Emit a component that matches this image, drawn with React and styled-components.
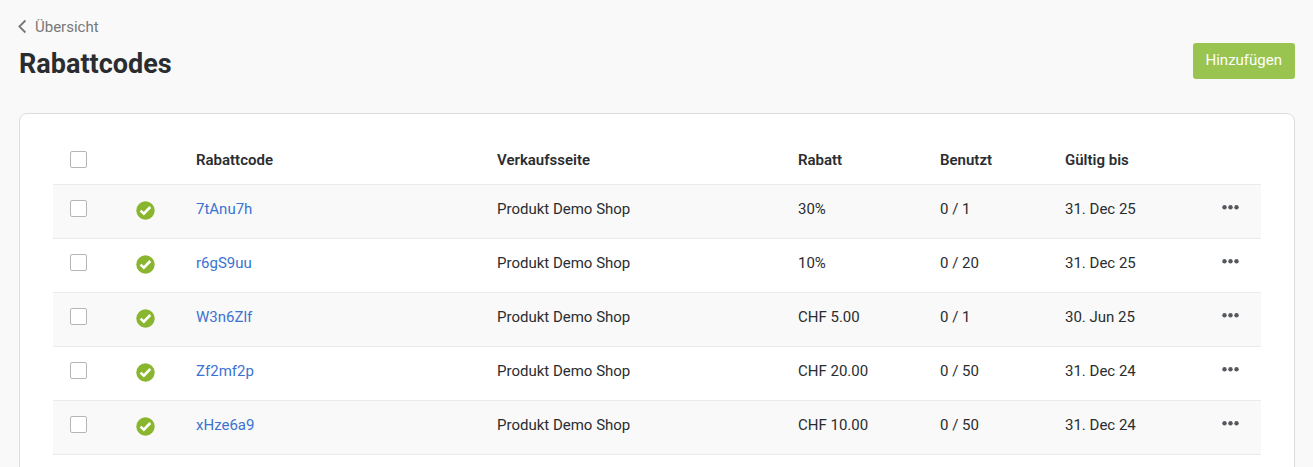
import React from 'react';
import styled, { createGlobalStyle } from "styled-components";


const GlobalStyle = createGlobalStyle`
* {
box-sizing: border-box;
}
body {
margin: 0;
background: #f9f9f9;
color: #2a2d30;
font-family: Roboto, "Liberation Sans", sans-serif;
font-size: 15px;
line-height: 20px;
}
`;

const Page = styled.main`
padding: 17px 18px 0 19px;
`;
const BackLink = styled.a`
display: inline-flex;
align-items: center;
gap: 8px;
color: #777;
text-decoration: none;
`;
const BackIcon = styled.svg`
width: 8px;
height: 14px;
overflow: visible;
`;
const Header = styled.header`
display: flex;
justify-content: space-between;
align-items: flex-start;
padding: 4px 0 32px;
`;
const Title = styled.h1`
margin: 0;
padding-top: 4px;
font-size: 27px;
line-height: 34px;
font-weight: 700;
`;
const AddButton = styled.button`
height: 36px;
padding: 0 13px 2px;
border: none;
border-radius: 3px;
background: #99c44f;
color: #fff;
font: inherit;
cursor: pointer;
`;
const Panel = styled.section`
padding: 20px 33px 32px;
border: 1px solid #ddd;
border-radius: 8px;
background: #fff;
`;
const Table = styled.table`
width: 100%;
table-layout: fixed;
border-collapse: collapse;
`;
const Col = styled.col`
width: ${({ $width }) => $width || "auto"};
`;
const HeadCell = styled.th`
height: 50px;
padding: 2px 0 0 17px;
border-bottom: 1px solid #ebebeb;
font-weight: 600;
text-align: left;
`;
const Row = styled.tr`
height: 54px;
background: ${({ $shaded }) => ($shaded ? "#f9f9f9" : "#fff")};
`;
const Cell = styled.td`
padding: 14px 0 0 17px;
border-bottom: 1px solid #ebebeb;
vertical-align: top;
`;
const SelectCell = styled(Cell)`
padding-top: 15px;
`;
const StatusCell = styled(Cell)`
padding-top: 16px;
`;
const Checkbox = styled.input`
appearance: none;
display: block;
width: 17px;
height: 17px;
margin: 0;
border: 1px solid #b5b5b5;
border-radius: 2px;
background: #fff;
&:checked {
background: #8ab62f;
}
`;
const StatusIcon = styled.svg`
display: block;
width: 19px;
height: 19px;
`;
const CodeLink = styled.a`
color: #3b73d1;
text-decoration: none;
`;
const MenuButton = styled.button`
display: block;
padding: 0;
border: none;
background: none;
color: #55595e;
line-height: 0;
cursor: pointer;
`;

const columns = ["66px", "60px", "", "", "142px", "125px", "157px", "56px"];

const discounts = [
    { code: "7tAnu7h", page: "Produkt Demo Shop", amount: "30%", used: "0 / 1", validUntil: "31. Dec 25" },
    { code: "r6gS9uu", page: "Produkt Demo Shop", amount: "10%", used: "0 / 20", validUntil: "31. Dec 25" },
    { code: "W3n6Zlf", page: "Produkt Demo Shop", amount: "CHF 5.00", used: "0 / 1", validUntil: "30. Jun 25" },
    { code: "Zf2mf2p", page: "Produkt Demo Shop", amount: "CHF 20.00", used: "0 / 50", validUntil: "31. Dec 24" },
    { code: "xHze6a9", page: "Produkt Demo Shop", amount: "CHF 10.00", used: "0 / 50", validUntil: "31. Dec 24" },
];

const DiscountRow = ({ data, shaded }) => {
    return (
        <Row $shaded={shaded}>
            <SelectCell>
                <Checkbox type="checkbox" aria-label={data.code} />
            </SelectCell>
            <StatusCell>
                <StatusIcon viewBox="0 0 19 19" role="img" aria-label="Aktiv">
                    <circle cx="9.5" cy="9.5" r="9.2" fill="#8ab62f" />
                    <path d="M4.6 9.6L7.8 12.6L14.3 6" fill="none" stroke="#fff" strokeWidth="2.6" />
                </StatusIcon>
            </StatusCell>
            <Cell><CodeLink href="#">{data.code}</CodeLink></Cell>
            <Cell>{data.page}</Cell>
            <Cell>{data.amount}</Cell>
            <Cell>{data.used}</Cell>
            <Cell>{data.validUntil}</Cell>
            <Cell>
                <MenuButton type="button" aria-label="Aktionen">
                    <svg width="17" height="17" viewBox="0 0 17 17" fill="currentColor">
                        <circle cx="2.5" cy="8.3" r="2.2" />
                        <circle cx="8.5" cy="8.3" r="2.2" />
                        <circle cx="14.5" cy="8.3" r="2.2" />
                    </svg>
                </MenuButton>
            </Cell>
        </Row>
    )
}

const App = () => {
    return (
        <>
            <GlobalStyle />
            <Page>
                <BackLink href="#">
                    <BackIcon viewBox="0 0 8 14" fill="none" stroke="currentColor" strokeWidth="1.8">
                        <path d="M6.4 0.5L0.4 6.5L6.4 12.5" />
                    </BackIcon>
                    Übersicht
                </BackLink>
                <Header>
                    <Title>Rabattcodes</Title>
                    <AddButton type="button">Hinzufügen</AddButton>
                </Header>
                <Panel>
                    <Table>
                        <colgroup>
                            {columns.map((width, i) => <Col key={i} $width={width} />)}
                        </colgroup>
                        <thead>
                            <tr>
                                <HeadCell><Checkbox type="checkbox" aria-label="Alle" /></HeadCell>
                                <HeadCell />
                                <HeadCell>Rabattcode</HeadCell>
                                <HeadCell>Verkaufsseite</HeadCell>
                                <HeadCell>Rabatt</HeadCell>
                                <HeadCell>Benutzt</HeadCell>
                                <HeadCell>Gültig bis</HeadCell>
                                <HeadCell />
                            </tr>
                        </thead>
                        <tbody>
                            {discounts.map((item, i) => (
                                <DiscountRow key={item.code} data={item} shaded={i % 2 === 0} />
                            ))}
                        </tbody>
                    </Table>
                </Panel>
            </Page>
        </>
    )
}
export default App;
